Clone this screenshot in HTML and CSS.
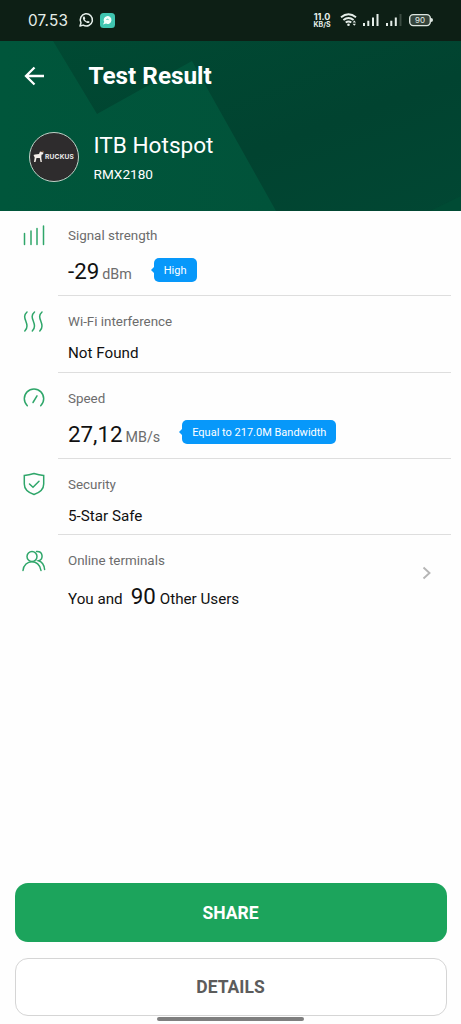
FILE: index.html
```html
<!DOCTYPE html>
<html lang="en">
<head>
<meta charset="utf-8">
<title>Test Result</title>
<link rel="stylesheet" href="styles.css">
</head>
<body>
<div class="screen">
  <div class="statusbar">
    <span class="clock">07.53</span>
    <svg class="whatsapp" width="16" height="16" viewBox="0 0 16 16"><path d="M2 14 3 10.800A6.100 6.100 0 1 1 5.200 13.100Z" fill="none" stroke="#e5eee9" stroke-width="1.500" stroke-linejoin="round"/><path d="M5.500 4.500c-1.400 1.300-.3 3.700 1.300 5.100 1.700 1.500 3.900 2.200 4.700.6.300-.7-.1-.8-1.700-1.500L9 9.500C8 9.100 7.100 8.300 6.700 7.300l.6-.8-.8-2Z" fill="#e5eee9"/></svg>
    <svg class="chat" width="15" height="15" viewBox="0 0 15 15"><rect width="15" height="15" rx="3.500" fill="#3fc5b0"/><path d="M3 11.500 4.200 9A3.900 3.900 0 1 1 6 10.600Z" fill="#f3fffb"/><path d="m6.500 7 1-1 1 .6" fill="none" stroke="#3fc5b0"/></svg>
    <span class="spacer"></span>
    <span class="rate"><b>11.0</b><b class="unit">KB/S</b></span>
    <svg class="status-icons" width="94" height="16" viewBox="0 0 94 16">
      <g fill="none" stroke="#e5eee9" stroke-width="1.900"><path d="M1 5.300Q8.500-.9 16 5.300M3.400 8Q8.500 3.800 13.600 8M5.700 10.600Q8.500 8.400 11.300 10.600"/></g>
      <circle cx="8.500" cy="12.800" r="1.300" fill="#e5eee9"/><path d="m12.600 10.500 1.700-2 1.700 2ZM12.600 11.800l1.700 2 1.700-2Z" fill="#e5eee9"/>
      <path d="M23 11h2v3h-2zM27.300 8.800h2V14h-2zM32 5.500h2V14h-2zM36.500 2h2v12h-2zM46 11h2v3h-2zM50.300 8.800h2V14h-2zM54.800 5.500h2V14h-2z" fill="#e5eee9"/><path d="M59.500 2h2v12h-2z" fill="#3b4b41"/>
      <rect x="69.700" y="2.600" width="20.600" height="11" rx="3.500" fill="#35443b" stroke="#dce5df" stroke-width="1.400"/><path d="M91 6q2 0 2 2t-2 2Z" fill="#dce5df"/>
      <text class="battery" x="80" y="11" text-anchor="middle">90</text>
    </svg>
  </div>
  <header class="hero">
    <svg class="backdrop" width="461" height="170" viewBox="0 0 461 170">
      <defs>
        <linearGradient id="ridge" x1="0" x2="1"><stop stop-color="#00563b"/><stop offset="1" stop-color="#01533a"/></linearGradient>
        <linearGradient id="shade" x1="0" y1="0" x2="1" y2="1"><stop stop-color="#004a33"/><stop offset=".6" stop-color="#014330"/><stop offset="1" stop-color="#014733"/></linearGradient>
      </defs>
      <path d="M0 0H461V170H0Z" fill="url(#shade)"/>
      <path d="M0 0H53L97 73 192 20 198 31 276 170H0Z" fill="url(#ridge)"/>
      <path d="M461 155 430 170h31Z" fill="#004b34"/>
    </svg>
    <div class="toolbar">
      <svg class="back" width="21" height="20" viewBox="0 0 21 20"><path d="M10.500 1.500 2 10l8.500 8.500M2 10h18" fill="none" stroke="#fff" stroke-width="2.300"/></svg>
      <h1>Test Result</h1>
    </div>
    <div class="network">
      <div class="logo">
        <svg class="dog" width="12" height="13" viewBox="0 0 12 13"><path d="M.5 5 2 4.500 6 4 7 1.500 8.500 2l2 .5-.5 1.700-1.500.5-.2 3 .6 4.300H7.500L6.800 8 3.500 8 2.500 12H1L1.700 7.500Z" fill="#f4eee8"/><path d="m8.300 1.800 1.500-.8 1 1" fill="none" stroke="#a86c3f" stroke-width=".7"/></svg>
        <span>RUCKUS</span>
      </div>
      <div class="names"><div class="ssid">ITB Hotspot</div><div class="model">RMX2180</div></div>
    </div>
  </header>
  <main class="results">
    <section class="row tall">
      <svg class="icon" width="24" height="24" viewBox="0 0 24 24"><path d="M2.500 9.500V20.500M9 7V20.500M15 4.500V20.500M21.500 2V20.500"/></svg>
      <div class="body"><div class="label">Signal strength</div><div class="value"><span class="big">-29</span><span class="measure">dBm</span><span class="tag">High</span></div></div>
    </section>
    <section class="row short">
      <svg class="icon low" width="24" height="24" viewBox="0 0 24 24"><path d="M5 2C-2 8 9.500 14 2.800 21M12.500 2C5.500 8 17 14 10.300 21M20 2C13 8 24.500 14 17.800 21"/></svg>
      <div class="body"><div class="label">Wi-Fi interference</div><div class="value">Not Found</div></div>
    </section>
    <section class="row tall">
      <svg class="icon" width="24" height="24" viewBox="0 0 24 24"><path d="M5.300 19.700A9.700 9.700 0 1 1 18.700 19.700M11 16.500 15 9.800"/></svg>
      <div class="body"><div class="label">Speed</div><div class="value"><span class="big">27,12</span><span class="measure">MB/s</span><span class="tag">Equal to 217.0M Bandwidth</span></div></div>
    </section>
    <section class="row short">
      <svg class="icon" width="24" height="24" viewBox="0 0 24 24"><path d="M12 1.500Q17 3 21.700 3.500V12C21.700 17.500 18 20.500 12 22.500 6 20.500 2.300 17.500 2.300 12V3.500Q7 3 12 1.500ZM7.500 12l3.500 3.300 6-6"/></svg>
      <div class="body"><div class="label">Security</div><div class="value">5-Star Safe</div></div>
    </section>
    <section class="row last">
      <svg class="icon low" width="24" height="24" viewBox="0 0 24 24"><circle cx="10" cy="7.500" r="5"/><path d="M1 21.500C2 10 17.500 9.500 19 21.500M14.500 2.500C21 2 22 10 16.500 11.800 20.500 13 22.200 16.500 22.600 20.500"/></svg>
      <div class="body"><div class="label">Online terminals</div><div class="value">You and<span class="big count">90</span>Other Users</div></div>
      <svg class="chevron" width="10" height="14" viewBox="0 0 10 14"><path d="m1.500 1.500 6 5.500-6 5.500" fill="none" stroke="#b5b5b5" stroke-width="1.900"/></svg>
    </section>
  </main>
  <footer class="actions">
    <button class="share">SHARE</button>
    <button class="details">DETAILS</button>
    <div class="homebar"></div>
  </footer>
</div>
</body>
</html>
```
FILE: styles.css
```css
* { box-sizing: border-box; }
body { margin: 0; font-family: Roboto, "Liberation Sans", sans-serif; background: #fff; }
svg { display: block; flex: none; }
.screen { width: 461px; height: 1024px; display: flex; flex-direction: column; overflow: hidden; background: #fefefe; white-space: nowrap; }
.statusbar { height: 41px; flex: none; background: #0d1f15; color: #e5eee9; display: flex; align-items: center; padding: 0 27px 1px 28px; }
.clock { width: 50px; font: 15.300px/20px Inter, sans-serif; letter-spacing: .2px; padding-top: 1px; }
.whatsapp { margin-right: 6px; }
.spacer { flex: 1; }
.rate { display: flex; flex-direction: column; align-items: center; width: 18px; margin-right: 9px; font: 9px/8px Inter, sans-serif; }
.rate b { font-weight: 700; }
.rate .unit { font-size: 7px; line-height: 7px; }
.battery { font: 8px Inter, sans-serif; fill: #e5eee9; }
.hero { height: 169.500px; flex: none; position: relative; color: #fff; overflow: hidden; }
.backdrop { position: absolute; inset: 0; }
.toolbar { position: relative; display: flex; align-items: center; height: 70px; padding-left: 24px; }
h1 { margin: 0 0 0 43.500px; font-size: 24.300px; font-weight: 700; line-height: 32px; }
.network { position: relative; display: flex; align-items: center; padding: 19px 0 0 29px; }
.logo { width: 50px; height: 50px; border-radius: 50%; border: 1.500px solid #bfd3c8; background: #2e2c2d; display: flex; align-items: center; padding-left: 3px; }
.logo span { font: 700 6.600px/10px Inter, sans-serif; letter-spacing: .2px; color: #eee; }
.names { margin-left: 14.500px; }
.ssid { font-size: 22.600px; line-height: 30px; padding-top: 1px; }
.model { font-size: 13.600px; line-height: 18px; margin-top: 4px; }
.results { flex: 1; }
.row { display: flex; position: relative; padding-left: 22px; }
.row.tall { height: 85.700px; }
.row.short { height: 76.800px; }
.icon { margin-top: 13px; fill: none; stroke: #2fa66a; stroke-width: 1.500; stroke-linecap: round; }
.icon.low { margin-top: 14px; }
.body { margin-left: 12px; width: 393px; padding: 16.900px 0 0 10px; border-bottom: 1px solid #dedede; }
.label { font-size: 13.400px; line-height: 18px; color: #6c6c6c; }
.value { display: flex; align-items: baseline; font-size: 15.200px; line-height: 20px; color: #111; margin-top: 12px; }
.tall .value, .last .value { line-height: 28px; margin-top: 12px; }
.big { font-size: 22.300px; }
.measure { color: #6c6c6c; margin-left: 3px; font-size: 14.300px; }
.tag { position: relative; align-self: flex-start; margin: .5px 0 0 22px; height: 24px; border-radius: 5px; background: #0798fa; color: #fff; font-size: 11px; line-height: 25px; padding: 0 10px; }
.tag::before { content: ""; position: absolute; left: -3px; top: 9px; border: 3px solid transparent; border-left: 0; border-right-color: #0798fa; }
.last .body { border: 0; width: auto; }
.count { margin: 0 4px 0 8px; }
.chevron { position: absolute; right: 29px; top: 31px; }
.actions { flex: none; display: flex; flex-direction: column; padding: 0 14.500px; height: 141px; }
button { width: 100%; height: 59px; border: 0; border-radius: 13px; font: 700 17.500px/59px Roboto, sans-serif; padding: 1px 0 0; flex: none; }
.share { background: #1ca45c; color: #fff; }
.details { height: 58.500px; margin-top: 15.500px; background: #fff; color: #5c5c5c; border: 1px solid #d5d5d5; line-height: 56px; padding: 0; }
.homebar { width: 147px; height: 4px; border-radius: 2px; background: #7f7f7f; margin: 1px auto 0; flex: none; }
```
